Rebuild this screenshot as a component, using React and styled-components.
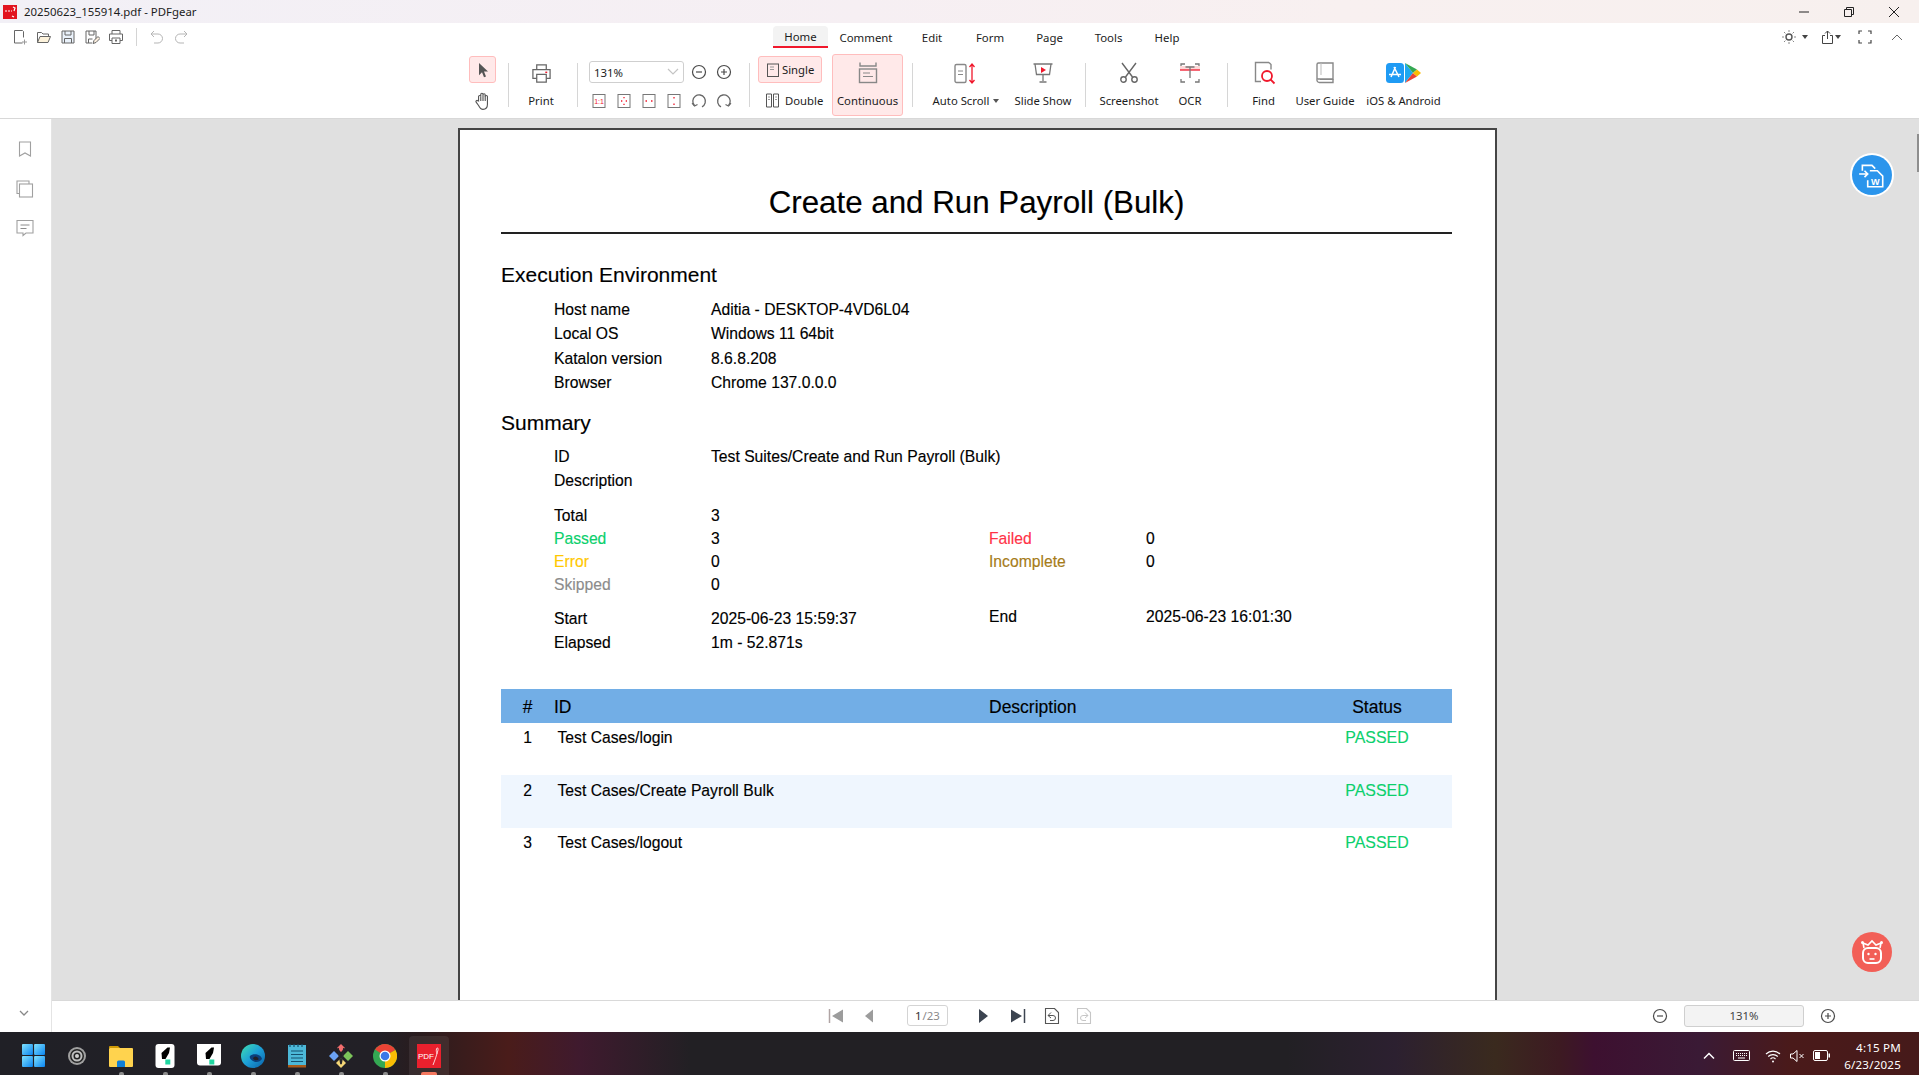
import React from 'react';
import styled, { createGlobalStyle } from 'styled-components';

const GlobalStyle = createGlobalStyle`
html, body { margin: 0; padding: 0; background: #fff; overflow: hidden; }
* { box-sizing: border-box; }
`
const uiFont = `"Noto Sans", "Open Sans", sans-serif`
const docFont = `"Liberation Sans", Arial, sans-serif`

const Screen = styled.div`
width: 1919px;
height: 1075px;
display: flex;
flex-direction: column;
overflow: hidden;
font-family: ${uiFont};
color: #1c1c1c;
`
const TitleBar = styled.div`
height: 23px;
flex: none;
display: flex;
align-items: center;
padding-left: 3px;
background: linear-gradient(90deg, #f2f0f6 0%, #f6eff3 45%, #f8f0f0 70%, #f7f0ee 100%);
font-size: 11.4px;
`
const TitleText = styled.span`
margin-left: 7px;
white-space: nowrap;
`
const WindowButtons = styled.div`
margin-left: auto;
padding-right: 3px;
display: flex;
`
const WindowButton = styled.div`
width: 45px;
height: 20px;
display: flex;
align-items: center;
justify-content: center;
`
const Ribbon = styled.div`
height: 96px;
flex: none;
border-bottom: 1px solid #d8d8d8;
background: #fff;
`
const TopRow = styled.div`
height: 25px;
display: flex;
align-items: center;
padding: 3px 0 0 8px;
`
const QuickButton = styled.div`
width: 24px;
height: 20px;
display: flex;
align-items: center;
justify-content: center;
`
const QuickSep = styled.div`
width: 1px;
height: 18px;
background: #d4d4d4;
margin: 0 8px;
`
const Tabs = styled.div`
display: flex;
align-self: flex-end;
margin-left: 580px;
`
const Tab = styled.div`
height: 22px;
width: ${p => p.$w}px;
display: flex;
align-items: center;
justify-content: center;
font-size: 11.4px;
white-space: nowrap;
${p => p.$active && `
  background: #f3f3f3;
  border-bottom: 2px solid #f0182c;
  border-radius: 4px 4px 0 0;
`}
`
const RightTools = styled.div`
margin-left: auto;
padding-right: 14px;
display: flex;
align-items: center;
`
const RightTool = styled.div`
width: ${p => p.$w}px;
margin-left: ${p => p.$ml || 0}px;
height: 20px;
display: flex;
align-items: center;
justify-content: center;
`
const ToolRow = styled.div`
height: 70px;
display: flex;
padding-left: 469px;
`
const Sep = styled.div`
width: 1px;
height: 44px;
margin: 15px 0 0 ${p => p.$ml || 0}px;
background: #d6d6d6;
flex: none;
`
const StackCol = styled.div`
width: ${p => p.$w}px;
margin-left: ${p => p.$ml || 0}px;
flex: none;
display: flex;
flex-direction: column;
padding-top: 8px;
gap: 4px;
`
const ModeButton = styled.div`
height: 27px;
display: flex;
align-items: center;
justify-content: ${p => p.$center ? 'center' : 'flex-start'};
padding-left: ${p => p.$center ? 0 : 7}px;
gap: ${p => p.$gap || 5}px;
font-size: 11.3px;
white-space: nowrap;
border-radius: 3px;
${p => p.$on && `
  background: #ffe9e9;
  border: 1px solid #ffbdbd;
`}
`
const Tool = styled.div`
width: ${p => p.$w}px;
margin-left: ${p => p.$ml || 0}px;
height: ${p => p.$box ? 62 : 70}px;
margin-top: ${p => p.$box ? 6 : 0}px;
padding-top: ${p => p.$box ? 4 : 11}px;
flex: none;
display: flex;
flex-direction: column;
align-items: center;
border-radius: 3px;
${p => p.$box && `
  background: #ffe9e9;
  border: 1px solid #ffbdbd;
`}
`
const ToolIcon = styled.div`
height: 28px;
display: flex;
align-items: center;
justify-content: center;
gap: 1px;
`
const ToolLabel = styled.div`
margin-top: 6px;
height: 16px;
line-height: 16px;
font-size: 11.3px;
white-space: nowrap;
display: flex;
align-items: center;
gap: 4px;
`
const Caret = styled.span`
width: 0;
height: 0;
border-left: 3px solid transparent;
border-right: 3px solid transparent;
border-top: 4px solid ${p => p.$c || '#555'};
`
const ZoomGroup = styled.div`
width: 171px;
flex: none;
padding: 13px 0 0 11px;
display: flex;
flex-direction: column;
gap: 10px;
`
const ZoomTop = styled.div`
display: flex;
align-items: center;
`
const ZoomSelect = styled.div`
width: 95px;
height: 22px;
border: 1px solid #cfcfcf;
border-radius: 3px;
display: flex;
align-items: center;
justify-content: space-between;
padding: 0 4px;
font-size: 11.4px;
`
const ZoomRoundBtn = styled.div`
width: 25px;
display: flex;
justify-content: center;
margin-left: ${p => p.$ml || 0}px;
`
const FitRow = styled.div`
display: flex;
align-items: center;
margin-left: -3px;
`
const FitBtn = styled.div`
width: 25.1px;
display: flex;
justify-content: center;
`
const Body = styled.div`
flex: 1;
display: flex;
min-height: 0;
`
const Sidebar = styled.div`
width: 52px;
flex: none;
border-right: 1px solid #e4e4e4;
background: #fff;
display: flex;
flex-direction: column;
align-items: center;
padding: 20px 0 9px 0;
gap: 19.5px;
`
const SideIcon = styled.div`
height: 20px;
display: flex;
align-items: center;
justify-content: center;
margin-top: ${p => p.$auto ? 'auto' : 0};
margin-left: ${p => p.$auto ? -3 : -1}px;
`
const MainCol = styled.div`
flex: 1;
min-width: 0;
display: flex;
flex-direction: column;
`
const Viewer = styled.div`
flex: 1;
min-height: 0;
background: #e0e0e0;
position: relative;
overflow: hidden;
padding: 9px 0 0 406px;
`
const Page = styled.div`
width: 1039px;
min-height: 1200px;
background: #fff;
border: 2px solid #454545;
padding: 52px 0 0 41px;
font-family: ${docFont};
font-size: 15.7px;
color: #000;
-webkit-text-stroke: .15px currentColor;
`
const DocInner = styled.div`
width: 951px;
`
const DocTitle = styled.div`
height: 50px;
line-height: 41px;
text-align: center;
font-size: 31.3px;
`
const TitleRule = styled.div`
height: 2px;
background: #222;
`
const SectionHead = styled.div`
margin-top: ${p => p.$mt}px;
height: 24px;
line-height: 24px;
font-size: 21px;
`
const Rows = styled.div`
margin-top: ${p => p.$mt}px;
`
const KvRow = styled.div`
height: ${p => p.$h || 24}px;
line-height: ${p => p.$h || 24}px;
display: grid;
grid-template-columns: 53px 157px 278px 157px 1fr;
`
const KvCell = styled.div`
grid-column: ${p => p.$col};
color: ${p => p.$c || '#000'};
white-space: nowrap;
${p => p.$up && `transform: translateY(-2px);`}
`
const Table = styled.div`
margin-top: 34px;
`
const TableHead = styled.div`
height: 34px;
padding-top: 2px;
background: #72aee6;
display: grid;
grid-template-columns: 53px 435px 313px 150px;
align-items: center;
font-size: 17.5px;
`
const TableRow = styled.div`
height: ${p => p.$h}px;
padding-top: ${p => p.$pt || 3}px;
line-height: 24px;
background: ${p => p.$alt ? '#eff6fe' : 'transparent'};
display: grid;
grid-template-columns: 53px 435px 313px 150px;
align-items: start;
`
const CenterCell = styled.div`
text-align: center;
color: ${p => p.$c || '#000'};
font-size: ${p => p.$c ? '15.9px' : 'inherit'};
`
const IdCell = styled.div`
padding-left: ${p => p.$pl || 0}px;
`
const FloatButton = styled.div`
position: absolute;
right: ${p => p.$r}px;
top: ${p => p.$t}px;
width: 40px;
height: 40px;
border-radius: 50%;
background: ${p => p.$bg};
box-shadow: ${p => p.$ring ? '0 0 0 2px #fff' : 'none'};
display: flex;
align-items: center;
justify-content: center;
`
const ScrollThumb = styled.div`
position: absolute;
right: 0;
top: 15px;
width: 2px;
height: 38px;
background: #8e8e8e;
`
const BottomBar = styled.div`
height: 32px;
flex: none;
border-top: 1px solid #d9d9d9;
background: #fff;
display: flex;
align-items: center;
padding: 0 79px 2px 770px;
`
const NavBtn = styled.div`
width: 28px;
height: 24px;
flex: none;
margin-left: ${p => p.$ml || 0}px;
display: flex;
align-items: center;
justify-content: center;
`
const PageInput = styled.div`
width: 41px;
height: 21px;
margin-left: 23px;
flex: none;
border: 1px solid #d4d4d4;
border-radius: 3px;
display: flex;
align-items: center;
justify-content: center;
font-size: 11.4px;
color: #555;
`
const PageNow = styled.span`
color: #333;
`
const Faint = styled.span`
color: #8a8a8a;
margin-left: 1px;
`
const ZoomReadout = styled.div`
width: 120px;
height: 22px;
margin-left: 12px;
flex: none;
background: #f3f3f3;
border: 1px solid #cfcfcf;
border-radius: 3px;
display: flex;
align-items: center;
justify-content: center;
font-size: 11.4px;
color: #444;
`
const ZoomEnd = styled.div`
margin-left: auto;
display: flex;
align-items: center;
`
const ZoomEndBtn = styled.div`
width: 24px;
margin-left: ${p => p.$ml || 0}px;
display: flex;
justify-content: center;
`
const Taskbar = styled.div`
height: 43px;
flex: none;
background: linear-gradient(90deg, #202026 0px, #222026 380px, #2a1c1e 420px, #4a1c1a 508px, #3f1a2e 580px, #222024 690px, #222024 1287px, #2c2030 1395px, #3a2a1e 1495px, #3d1a22 1560px, #3d1030 1594px, #3a1a35 1700px, #4a1a1a 1790px, #461a1a 1919px);
display: flex;
align-items: center;
padding-left: 11px;
`
const TaskSlot = styled.div`
width: 44px;
height: 43px;
flex: none;
padding-top: 4px;
position: relative;
display: flex;
align-items: center;
justify-content: center;
&::after {
  content: '';
  display: ${p => p.$dot ? 'block' : 'none'};
  position: absolute;
  bottom: 0;
  left: 50%;
  width: ${p => p.$active ? 16 : 5}px;
  height: 3px;
  margin-left: ${p => p.$active ? -8 : -2.5}px;
  border-radius: 2px 2px 0 0;
  background: ${p => p.$active ? '#f4785f' : '#8c8c8c'};
}
${p => p.$active && `
  &::before {
    content: '';
    position: absolute;
    left: 2px;
    right: 2px;
    top: 4px;
    bottom: 0;
    border-radius: 4px 4px 0 0;
    background: rgba(255,255,255,.07);
  }
`}
`
const Tray = styled.div`
margin-left: auto;
display: flex;
align-items: center;
padding: 4px 18px 0 0;
color: #fff;
`
const TrayIcon = styled.div`
width: ${p => p.$w}px;
display: flex;
justify-content: center;
`
const Clock = styled.div`
margin-left: 13px;
text-align: right;
font-size: 11.6px;
line-height: 17px;
letter-spacing: .2px;
`

// ---- icons ----
const Svg = ({ s = 16, w, h, children, vb }) => (
  <svg width={w || s} height={h || s} viewBox={vb || `0 0 ${w || s} ${h || s}`} fill="none" style={{ display: 'block', flex: 'none' }}>{children}</svg>
)
const G = '#666'
const R = '#f0182c'

const AppLogo = () => (
  <Svg s={14}>
    <rect width="14" height="14" fill="#e2141f" />
    <path d="M2 6h2M5 6h2M8 6h1M10 2l2 1-1 3M9 11l2 1" stroke="#fff" strokeWidth="1.2" />
  </Svg>
)
const IcNew = () => <Svg s={16}><path d="M2.5 1.5h8l1 1v6M2.5 1.5v12.5h8" stroke={G} /><path d="M12.5 10.5v5M10 13h5" stroke="#999" /></Svg>
const IcOpen = () => <Svg s={16}><path d="M1.5 13.5v-10h4l1.5 1.500h5.500v2" stroke={G} /><path d="M1.500 13.500l2.500-6h10.500l-2.500 6z" stroke={G} fill="#fdf3dc" /></Svg>
const IcSave = () => <Svg s={16}><path d="M2 2h12v12H2z" stroke={G} fill="#eaf2fb" /><path d="M5 2v4h6V2M4.500 14V9.500h7V14" stroke={G} /></Svg>
const IcSaveAs = () => <Svg s={16}><path d="M2 2h10v8M2 2v12h6" stroke={G} /><path d="M5 2v4h5V2M4.500 14v-4h4" stroke={G} /><path d="M9 14.500l1-3 4-4 2 2-4 4z" stroke={G} fill="#fbeede" /></Svg>
const IcPrint = ({ s = 16, c = G, dot = G }) => (
  <Svg s={s} vb="0 0 16 16">
    <path d="M4 5V1.500h8V5M4 11.500H1.500V5h13v6.500H12" stroke={c} />
    <path d="M4 9h8v5.500H4z" stroke={c} />
    <rect x="7" y="10.500" width="2" height="2" fill={dot} />
  </Svg>
)
const IcUndo = ({ flip }) => (
  <Svg s={16}>
    <g transform={flip ? 'translate(16 0) scale(-1 1)' : undefined}>
      <path d="M5 2L2 5l3 3" stroke="#b5b5b5" />
      <path d="M2 5h7a4.500 4.500 0 0 1 0 9H5" stroke="#b5b5b5" />
    </g>
  </Svg>
)
const IcWinMin = () => <Svg s={12}><path d="M1 6h10" stroke="#222" /></Svg>
const IcWinRestore = () => <Svg s={12}><path d="M1.500 3.500h7v7h-7zM3.500 3.500V1.500h7v7h-2" stroke="#222" /></Svg>
const IcWinClose = () => <Svg s={12}><path d="M1 1l10 10M11 1L1 11" stroke="#222" /></Svg>
const IcSun = () => (
  <Svg s={16}>
    <circle cx="8" cy="8" r="3" stroke="#555" strokeWidth="1.400" />
    <path d="M8 1v2M8 13v2M1 8h2M13 8h2M3 3l1.400 1.400M11.600 11.600L13 13M13 3l-1.400 1.400M4.400 11.600L3 13" stroke="#888" />
  </Svg>
)
const IcShare = () => <Svg s={14}><path d="M4 5.500H1.500v8h10v-8H9" stroke="#444" /><path d="M6.500 9V1M4 3.500L6.500 1 9 3.500" stroke="#444" /></Svg>
const IcFull = () => <Svg s={14}><path d="M1 4V1h3M10 1h3v3M13 10v3h-3M4 13H1v-3" stroke="#444" strokeWidth="1.200" /></Svg>
const IcChevUp = () => <Svg s={14}><path d="M2 10l5-5 5 5" stroke="#666" /></Svg>
const IcChevDown = ({ c = '#c4c4c4' }) => <Svg w={12} h={8}><path d="M1 1l5 5 5-5" stroke={c} strokeWidth="1.200" /></Svg>
const IcPointer = () => <Svg s={16}><path d="M4 1l9 8.500H9l2 5-2 .8-2-5-3 3z" fill="#555" /></Svg>
const IcHand = () => (
  <Svg s={20} vb="0 0 18 18">
    <path d="M5 9V5a1 1 0 0 1 2 0V3a1 1 0 0 1 2 0v.500a1 1 0 0 1 2 0V5a1 1 0 0 1 2 0v7c0 3-2 4.500-4 4.500S6 15 5 13L2.800 10c-.7-1 .7-2 1.500-1.200z" stroke="#555" fill="#fff" />
    <path d="M7 5v4M9 3.500V9M11 4v5" stroke="#555" />
  </Svg>
)
const IcPrintBig = () => (
  <Svg s={21} vb="0 0 22 22">
    <path d="M6 7V2h10v5M6 16H2V7h18v9h-4" stroke={G} strokeWidth="1.300" />
    <path d="M6 12h10v8H6z" stroke={G} strokeWidth="1.300" />
    <rect x="15" y="9" width="2" height="1.500" fill={R} />
  </Svg>
)
const IcCircle = ({ plus }) => (
  <Svg s={16}>
    <circle cx="8" cy="8" r="6.500" stroke="#4a4a4a" strokeWidth="1.200" />
    <path d={plus ? 'M5 8h6M8 5v6' : 'M5 8h6'} stroke="#4a4a4a" strokeWidth="1.200" />
  </Svg>
)
const Fit = ({ d, children }) => (
  <Svg s={16}>
    <rect x="2" y="1.500" width="12" height="13" stroke="#777" />
    {d && <path d={d} stroke={R} strokeWidth="1.300" />}
    {children}
  </Svg>
)
const IcRotate = ({ flip }) => (
  <Svg s={16}>
    <g transform={flip ? 'translate(16 0) scale(-1 1)' : undefined}>
      <path d="M3.500 12.500A6.300 6.300 0 1 1 11 13.800" stroke="#666" strokeWidth="1.300" />
      <path d="M1 10.200l2.500 2.800 3-1.600" stroke="#666" strokeWidth="1.100" />
    </g>
  </Svg>
)
const IcSingle = () => <Svg s={14}><rect x="1.500" y="1" width="11" height="12.500" stroke="#555" /><path d="M4 4h4M4 6.500h4" stroke="#999" /></Svg>
const IcDouble = () => <Svg s={15}><path d="M1.500 1h5v13h-5zM8.500 1h5v13h-5z" stroke="#555" /><path d="M3 4h2M3 6.500h2M10 4h2M10 6.500h2" stroke="#999" /></Svg>
const IcContinuous = () => (
  <Svg s={24}>
    <path d="M4 1.500V5h16V1.500" stroke="#888" strokeWidth="1.400" />
    <rect x="3.500" y="8" width="17" height="13.500" stroke="#888" strokeWidth="1.400" />
    <path d="M7 12h7M7 15.500h10" stroke="#888" strokeWidth="1.200" />
  </Svg>
)
const IcAutoScroll = () => (
  <Svg s={24}>
    <rect x="1" y="3.500" width="11" height="18" rx="1.500" stroke="#888" strokeWidth="1.400" />
    <path d="M4 10h5M4 13.500h5" stroke="#888" />
    <path d="M18 3v19M15.500 6L18 3l2.500 3M15.500 19l2.500 3 2.500-3" stroke={R} strokeWidth="1.300" />
  </Svg>
)
const IcSlide = () => (
  <Svg s={22}>
    <path d="M1.500 2h19M3 2l1.500 10.500h13L19 2" stroke="#777" strokeWidth="1.300" />
    <path d="M11 12.500V19M7.500 20h7" stroke="#777" strokeWidth="1.300" />
    <path d="M9 5l5 3-5 3z" fill={R} />
  </Svg>
)
const IcScissors = () => (
  <Svg s={22}>
    <path d="M4 1l10.500 14M18 1L7.500 15" stroke="#666" strokeWidth="1.400" />
    <circle cx="5.500" cy="17.500" r="2.700" stroke="#666" strokeWidth="1.400" />
    <circle cx="16.500" cy="17.500" r="2.700" stroke="#666" strokeWidth="1.400" />
  </Svg>
)
const IcOcr = () => (
  <Svg s={22}>
    <path d="M2 5V2h4M16 2h4v3M2 17v3h4M16 20h4v-3" stroke="#777" strokeWidth="1.300" />
    <rect x="1" y="4" width="20" height="4" fill="#fcd9d9" />
    <path d="M1 8h20" stroke={R} strokeWidth="1.300" />
    <path d="M6.500 5h9M11 5v11" stroke="#777" strokeWidth="1.300" />
  </Svg>
)
const IcFind = () => (
  <Svg s={24}>
    <path d="M17 1.500H3.500v19H9" stroke="#888" strokeWidth="1.400" />
    <path d="M17 1.500l2 2v5" stroke="#888" strokeWidth="1.400" />
    <circle cx="15" cy="15" r="5" stroke={R} strokeWidth="1.800" />
    <path d="M18.500 18.500l4 4" stroke={R} strokeWidth="1.800" />
  </Svg>
)
const IcGuide = () => (
  <Svg s={24}>
    <path d="M4 18V3.500A1.500 1.500 0 0 1 5.500 2H20v16z" stroke="#888" strokeWidth="1.400" />
    <path d="M8 2v12" stroke="#bbb" strokeWidth="1" />
    <path d="M4 18.500A2.500 2.500 0 0 0 6.500 21.500H20v-3.500" stroke="#888" strokeWidth="1.400" />
    <path d="M7 18.500h13" stroke="#888" />
  </Svg>
)
const IcAppStore = () => (
  <Svg s={18} h={20} vb="0 0 18 20">
    <rect width="18" height="20" rx="3.500" fill="#1f9bf4" />
    <path d="M9.500 4L5 14M8 4l5 10M3 11.500h12" stroke="#fff" strokeWidth="1.500" />
  </Svg>
)
const IcPlay = () => (
  <Svg w={16} h={20}>
    <path d="M0 0l8 10-8 10z" fill="#1fa8f0" />
    <path d="M0 0l12 6.500L8 10z" fill="#34a853" />
    <path d="M0 20l12-6.500L8 10z" fill="#ea4335" />
    <path d="M12 6.500L16 10l-4 3.500L8 10z" fill="#fbbc04" />
  </Svg>
)
const IcBookmark = () => <Svg s={16}><path d="M2.500 1h11v14L8 12l-5.500 3z" stroke="#a0a0a0" strokeWidth="1.100" /></Svg>
const IcPages = () => <Svg s={18}><path d="M3.500 13.500H1V1h12v3" stroke="#a0a0a0" strokeWidth="1.100" /><rect x="3.500" y="4" width="13" height="13" stroke="#a0a0a0" strokeWidth="1.100" /></Svg>
const IcComment = () => <Svg s={18}><path d="M1 1.500h16v12.500h-7l-3 2.500v-2.500H1z" stroke="#a0a0a0" strokeWidth="1.100" /><path d="M4.500 6h9M4.500 9.500h6" stroke="#8c8c8c" /></Svg>
const IcDown = () => <Svg s={12}><path d="M2 4l4 4 4-4" stroke="#888" strokeWidth="1.300" /></Svg>
const IcToWord = () => (
  <Svg s={30} vb="0 0 28 28">
    <path d="M5 10V5h9l3 3" stroke="#fff" strokeWidth="1.500" />
    <path d="M2 13h8M7 10l3 3-3 3" stroke="#fff" strokeWidth="1.500" />
    <path d="M12 10h7l5 5v10H10v-6" stroke="#fff" strokeWidth="1.500" />
    <text x="13" y="23" fontSize="8.500" fontWeight="bold" fontFamily={docFont} fill="#fff">W</text>
  </Svg>
)
const IcRobot = () => (
  <Svg s={28}>
    <rect x="5" y="10" width="18" height="15" rx="5" stroke="#fff" strokeWidth="2" />
    <path d="M6 10L5 5l5 2 4-4 4 4 5-2-1 5" stroke="#fff" strokeWidth="1.600" />
    <circle cx="4.500" cy="4.500" r="1.500" fill="#fff" />
    <circle cx="23.500" cy="4.500" r="1.500" fill="#fff" />
    <circle cx="10.500" cy="16" r="1.200" fill="#fff" />
    <circle cx="17.500" cy="16" r="1.200" fill="#fff" />
    <path d="M11.500 21h5" stroke="#fff" strokeWidth="1.600" />
  </Svg>
)
const navOff = '#9c9c9c'
const navOn = '#3c4450'
const IcFirst = () => <Svg s={16}><path d="M1.500 1v14" stroke="#b0a4a4" strokeWidth="1.500" /><path d="M15 1.500v13L4 8z" fill={navOff} /></Svg>
const IcPrev = () => <Svg s={16}><path d="M11 1.500v13L3 8z" fill={navOff} /></Svg>
const IcNext = () => <Svg s={16}><path d="M4 1v14l9-7z" fill={navOn} /></Svg>
const IcLast = () => <Svg s={16}><path d="M1 1.500v13L12 8z" fill={navOn} /><path d="M14.500 1v14" stroke={navOn} strokeWidth="1.500" /></Svg>
const IcHistory = ({ c, flip }) => (
  <Svg s={16}>
    <path d="M1.500 .5h9l4 4v11h-13z" stroke={c} strokeWidth="1.100" />
    <g transform={flip ? 'translate(16 0) scale(-1 1)' : undefined}>
      <path d="M7 4.500L4 7.500l3 2.500M4 7.500h5a2.500 2.500 0 0 1 0 5H6" stroke={c} />
    </g>
  </Svg>
)

const TbWin = () => (
  <Svg s={23} vb="0 0 24 24">
    <defs><linearGradient id="w" x1="0" y1="0" x2="1" y2="1"><stop offset="0" stopColor="#7fe3ff" /><stop offset="1" stopColor="#0a84f0" /></linearGradient></defs>
    <rect x="0" y="0" width="11.400" height="11.400" rx="1" fill="url(#w)" />
    <rect x="12.600" y="0" width="11.400" height="11.400" rx="1" fill="url(#w)" />
    <rect x="0" y="12.600" width="11.400" height="11.400" rx="1" fill="url(#w)" />
    <rect x="12.600" y="12.600" width="11.400" height="11.400" rx="1" fill="url(#w)" />
  </Svg>
)
const TbRing = () => (
  <Svg s={20}>
    <circle cx="10" cy="10" r="9" fill="#a0a0a0" />
    <circle cx="10" cy="10" r="7" fill="#222" />
    <circle cx="10" cy="10" r="5.500" fill="#bdbdbd" />
    <circle cx="10" cy="10" r="3.500" fill="#222" />
    <circle cx="10" cy="10" r="2" fill="#cfcfcf" />
  </Svg>
)
const TbFolder = () => (
  <Svg s={24}>
    <path d="M0 3a1 1 0 0 1 1-1h8l2 2h-11z" fill="#cf9a06" />
    <rect x="0" y="4" width="24" height="19" rx="1" fill="#ffd34e" />
    <path d="M8 23v-5a1.500 1.500 0 0 1 1.500-1.500h5A1.500 1.500 0 0 1 16 18v5z" fill="#0f7fd6" />
  </Svg>
)
const TbApp = ({ s }) => (
  <Svg s={24}>
    <rect x={12 - s / 2} y={12 - (s + 5) / 2} width={s} height={s + 5 > 24 ? 24 : s + 5} rx="3" fill="#fff" />
    <path d="M8.500 9L14.500 3.500H17L16 9l-3.500 6H9z" fill="#000" />
    <rect x="12.300" y="15.500" width="5" height="5" fill="#1fd6a0" />
  </Svg>
)
const TbEdge = () => (
  <Svg s={24}>
    <defs><linearGradient id="e" x1="0" y1="0" x2="1" y2="1"><stop offset="0" stopColor="#3fe0b0" /><stop offset=".5" stopColor="#1da0d8" /><stop offset="1" stopColor="#0a5fa8" /></linearGradient></defs>
    <circle cx="12" cy="12" r="12" fill="url(#e)" />
    <path d="M9 12c3-3 11-2 12 3-2 3-6 4-9 2-2-1-4-3-3-5z" fill="#0c3f7a" />
    <path d="M12 14a3 3 0 0 1 4-1c2 1 2 3 0 3-2 .5-4-.5-4-2z" fill="#222026" />
  </Svg>
)
const TbNotes = () => (
  <Svg s={24}>
    <rect x="3" y="1" width="18" height="22" fill="#4cb8d8" />
    <rect x="3" y="21" width="18" height="2.500" fill="#a85a1a" />
    <path d="M6 7h12M6 10.500h12M6 14h12M6 17.500h12" stroke="#15506e" strokeWidth="1.200" />
    <path d="M5 0v3M9 0v3M13 0v3M17 0v3" stroke="#15506e" strokeWidth="1.200" />
  </Svg>
)
const TbGit = () => (
  <Svg s={24}>
    <path d="M12 0l4 4-4 4-4-4z" fill="#f26d6d" />
    <path d="M5 7l5 5-5 5-5-5z" fill="#6ba3f5" />
    <path d="M19 7l5 5-5 5-5-5z" fill="#7cc45a" />
    <path d="M12 14l5 5-5 5-5-5z" fill="#f5d777" />
    <path d="M9 4l3 16M15 4l-3 16" stroke="#26262a" strokeWidth="1.600" />
  </Svg>
)
const TbChrome = () => (
  <Svg s={24}>
    <circle cx="12" cy="12" r="12" fill="#34a853" />
    <path d="M12 12L2 5.500A12 12 0 0 1 22.400 6z" fill="#ea4335" />
    <path d="M12 12l10.400-6A12 12 0 0 1 12 24z" fill="#fbbc04" />
    <circle cx="12" cy="12" r="5.500" fill="#fff" />
    <circle cx="12" cy="12" r="4.300" fill="#3b78e7" />
  </Svg>
)
const TbPdf = () => (
  <Svg s={24}>
    <rect width="24" height="24" fill="#e8101e" />
    <text x="1" y="15" fontSize="8" fontFamily={docFont} fill="#fff">PDF</text>
    <path d="M16 21c2-5 4-11 5-15 .5-2-1-3-1.500-1-.5 2 0 3 .5 5" stroke="#fff" strokeWidth=".8" />
  </Svg>
)
const IcKeyboard = () => (
  <Svg w={17} h={12}>
    <rect x=".5" y=".5" width="16" height="10" rx="1" stroke="#fff" />
    <path d="M3 3.500h11M3 5.500h11" stroke="#fff" strokeDasharray="1 1" />
    <path d="M5 8h7" stroke="#fff" />
  </Svg>
)
const IcWifi = () => (
  <Svg s={16}>
    <path d="M1 6a10 10 0 0 1 14 0M3.200 8.500a7 7 0 0 1 9.600 0M5.500 11a3.600 3.600 0 0 1 5 0" stroke="#fff" strokeWidth="1.100" />
    <circle cx="8" cy="13.500" r="1" fill="#fff" />
  </Svg>
)
const IcMute = () => (
  <Svg s={16}>
    <path d="M1.500 6v4h2.500l4 3.500v-11L4 6z" stroke="#fff" />
    <path d="M10.500 6l4 4M14.500 6l-4 4" stroke="#fff" />
  </Svg>
)
const IcBattery = () => (
  <Svg w={17} h={11}>
    <rect x=".5" y=".5" width="14" height="10" rx="1.500" stroke="#fff" />
    <rect x="2" y="2" width="5" height="7" fill="#fff" />
    <rect x="15.500" y="3.500" width="1.500" height="4" fill="#fff" />
  </Svg>
)

export default function App() {
  return (
    <Screen>
      <GlobalStyle />
      <TitleBar>
        <AppLogo />
        <TitleText>20250623_155914.pdf - PDFgear</TitleText>
        <WindowButtons>
          <WindowButton><IcWinMin /></WindowButton>
          <WindowButton><IcWinRestore /></WindowButton>
          <WindowButton><IcWinClose /></WindowButton>
        </WindowButtons>
      </TitleBar>

      <Ribbon>
        <TopRow>
          <QuickButton><IcNew /></QuickButton>
          <QuickButton><IcOpen /></QuickButton>
          <QuickButton><IcSave /></QuickButton>
          <QuickButton><IcSaveAs /></QuickButton>
          <QuickButton><IcPrint /></QuickButton>
          <QuickSep />
          <QuickButton><IcUndo /></QuickButton>
          <QuickButton><IcUndo flip /></QuickButton>
          <Tabs>
            <Tab $w={55} $active>Home</Tab>
            <Tab $w={76}>Comment</Tab>
            <Tab $w={56}>Edit</Tab>
            <Tab $w={60}>Form</Tab>
            <Tab $w={59}>Page</Tab>
            <Tab $w={59}>Tools</Tab>
            <Tab $w={58}>Help</Tab>
          </Tabs>
          <RightTools>
            <RightTool $w={18}><IcSun /></RightTool>
            <RightTool $w={14}><Caret $c="#444" /></RightTool>
            <RightTool $w={14} $ml={9}><IcShare /></RightTool>
            <RightTool $w={6}><Caret $c="#444" /></RightTool>
            <RightTool $w={48}><IcFull /></RightTool>
            <RightTool $w={16}><IcChevUp /></RightTool>
          </RightTools>
        </TopRow>
        <ToolRow>
          <StackCol $w={27}>
            <ModeButton $on $center><IcPointer /></ModeButton>
            <ModeButton $center><IcHand /></ModeButton>
          </StackCol>
          <Sep $ml={12} />
          <Tool $w={64}>
            <ToolIcon><IcPrintBig /></ToolIcon>
            <ToolLabel>Print</ToolLabel>
          </Tool>
          <Sep $ml={4} />
          <ZoomGroup>
            <ZoomTop>
              <ZoomSelect>131%<IcChevDown /></ZoomSelect>
              <ZoomRoundBtn $ml={2}><IcCircle /></ZoomRoundBtn>
              <ZoomRoundBtn><IcCircle plus /></ZoomRoundBtn>
            </ZoomTop>
            <FitRow>
              <FitBtn><Fit><text x="8" y="10.500" fontSize="7" textAnchor="middle" fontFamily={docFont} fill={R}>1:1</text></Fit></FitBtn>
              <FitBtn><Fit d="M8 4v1.300M8 10.700V12M5 8h1.300M9.700 8H11" /></FitBtn>
              <FitBtn><Fit d="M4.500 8h1.500M10 8h1.500" /></FitBtn>
              <FitBtn><Fit d="M8 4v1.500M8 10.500V12" /></FitBtn>
              <FitBtn><IcRotate /></FitBtn>
              <FitBtn><IcRotate flip /></FitBtn>
            </FitRow>
          </ZoomGroup>
          <Sep />
          <StackCol $w={64} $ml={8}>
            <ModeButton $on $gap={2}><IcSingle />Single</ModeButton>
            <ModeButton><IcDouble />Double</ModeButton>
          </StackCol>
          <Tool $w={71} $ml={10} $box>
            <ToolIcon><IcContinuous /></ToolIcon>
            <ToolLabel>Continuous</ToolLabel>
          </Tool>
          <Sep $ml={9} />
          <Tool $w={84} $ml={11}>
            <ToolIcon><IcAutoScroll /></ToolIcon>
            <ToolLabel>Auto Scroll<Caret /></ToolLabel>
          </Tool>
          <Tool $w={70}>
            <ToolIcon><IcSlide /></ToolIcon>
            <ToolLabel>Slide Show</ToolLabel>
          </Tool>
          <Sep $ml={7} />
          <Tool $w={86}>
            <ToolIcon><IcScissors /></ToolIcon>
            <ToolLabel>Screenshot</ToolLabel>
          </Tool>
          <Tool $w={36}>
            <ToolIcon><IcOcr /></ToolIcon>
            <ToolLabel>OCR</ToolLabel>
          </Tool>
          <Sep $ml={19} />
          <Tool $w={71}>
            <ToolIcon><IcFind /></ToolIcon>
            <ToolLabel>Find</ToolLabel>
          </Tool>
          <Tool $w={52}>
            <ToolIcon><IcGuide /></ToolIcon>
            <ToolLabel>User Guide</ToolLabel>
          </Tool>
          <Tool $w={105}>
            <ToolIcon><IcAppStore /><IcPlay /></ToolIcon>
            <ToolLabel>iOS &amp; Android</ToolLabel>
          </Tool>
        </ToolRow>
      </Ribbon>

      <Body>
        <Sidebar>
          <SideIcon><IcBookmark /></SideIcon>
          <SideIcon><IcPages /></SideIcon>
          <SideIcon><IcComment /></SideIcon>
          <SideIcon $auto><IcDown /></SideIcon>
        </Sidebar>
        <MainCol>
          <Viewer>
            <Page>
              <DocInner>
                <DocTitle>Create and Run Payroll (Bulk)</DocTitle>
                <TitleRule />
                <SectionHead $mt={29}>Execution Environment</SectionHead>
                <Rows $mt={11}>
                  <KvRow><KvCell $col={2}>Host name</KvCell><KvCell $col={3}>Aditia - DESKTOP-4VD6L04</KvCell></KvRow>
                  <KvRow><KvCell $col={2}>Local OS</KvCell><KvCell $col={3}>Windows 11 64bit</KvCell></KvRow>
                  <KvRow $h={25}><KvCell $col={2}>Katalon version</KvCell><KvCell $col={3}>8.6.8.208</KvCell></KvRow>
                  <KvRow><KvCell $col={2}>Browser</KvCell><KvCell $col={3}>Chrome 137.0.0.0</KvCell></KvRow>
                </Rows>
                <SectionHead $mt={16}>Summary</SectionHead>
                <Rows $mt={9}>
                  <KvRow $h={25}><KvCell $col={2}>ID</KvCell><KvCell $col={3}>Test Suites/Create and Run Payroll (Bulk)</KvCell></KvRow>
                  <KvRow><KvCell $col={2}>Description</KvCell></KvRow>
                </Rows>
                <Rows $mt={11}>
                  <KvRow $h={23}><KvCell $col={2}>Total</KvCell><KvCell $col={3}>3</KvCell></KvRow>
                  <KvRow $h={23}>
                    <KvCell $col={2} $c="#0bd06c">Passed</KvCell><KvCell $col={3}>3</KvCell>
                    <KvCell $col={4} $c="#ff3347">Failed</KvCell><KvCell $col={5}>0</KvCell>
                  </KvRow>
                  <KvRow $h={23}>
                    <KvCell $col={2} $c="#ffc800">Error</KvCell><KvCell $col={3}>0</KvCell>
                    <KvCell $col={4} $c="#a67c1a">Incomplete</KvCell><KvCell $col={5}>0</KvCell>
                  </KvRow>
                  <KvRow $h={23}><KvCell $col={2} $c="#8c8c8c">Skipped</KvCell><KvCell $col={3}>0</KvCell></KvRow>
                </Rows>
                <Rows $mt={11}>
                  <KvRow>
                    <KvCell $col={2}>Start</KvCell><KvCell $col={3}>2025-06-23 15:59:37</KvCell>
                    <KvCell $col={4} $up>End</KvCell><KvCell $col={5} $up>2025-06-23 16:01:30</KvCell>
                  </KvRow>
                  <KvRow><KvCell $col={2}>Elapsed</KvCell><KvCell $col={3}>1m - 52.871s</KvCell></KvRow>
                </Rows>
                <Table>
                  <TableHead>
                    <CenterCell>#</CenterCell>
                    <IdCell>ID</IdCell>
                    <IdCell>Description</IdCell>
                    <CenterCell>Status</CenterCell>
                  </TableHead>
                  <TableRow $h={52}>
                    <CenterCell>1</CenterCell>
                    <IdCell $pl={3.5}>Test Cases/login</IdCell>
                    <IdCell />
                    <CenterCell $c="#0bd06c">PASSED</CenterCell>
                  </TableRow>
                  <TableRow $h={53} $alt $pt={4}>
                    <CenterCell>2</CenterCell>
                    <IdCell $pl={3.5}>Test Cases/Create Payroll Bulk</IdCell>
                    <IdCell />
                    <CenterCell $c="#0bd06c">PASSED</CenterCell>
                  </TableRow>
                  <TableRow $h={52}>
                    <CenterCell>3</CenterCell>
                    <IdCell $pl={3.5}>Test Cases/logout</IdCell>
                    <IdCell />
                    <CenterCell $c="#0bd06c">PASSED</CenterCell>
                  </TableRow>
                </Table>
              </DocInner>
            </Page>
            <FloatButton $r={27} $t={36} $bg="#2b95ec" $ring><IcToWord /></FloatButton>
            <FloatButton $r={27} $t={813} $bg="#f25f57"><IcRobot /></FloatButton>
            <ScrollThumb />
          </Viewer>
          <BottomBar>
            <NavBtn><IcFirst /></NavBtn>
            <NavBtn $ml={6}><IcPrev /></NavBtn>
            <PageInput><PageNow>1</PageNow><Faint>/23</Faint></PageInput>
            <NavBtn $ml={21}><IcNext /></NavBtn>
            <NavBtn $ml={7}><IcLast /></NavBtn>
            <NavBtn $ml={6}><IcHistory c="#555" /></NavBtn>
            <NavBtn $ml={4}><IcHistory c="#c6c6c6" flip /></NavBtn>
            <ZoomEnd>
              <ZoomEndBtn><IcCircle /></ZoomEndBtn>
              <ZoomReadout>131%</ZoomReadout>
              <ZoomEndBtn $ml={12}><IcCircle plus /></ZoomEndBtn>
            </ZoomEnd>
          </BottomBar>
        </MainCol>
      </Body>

      <Taskbar>
        <TaskSlot><TbWin /></TaskSlot>
        <TaskSlot><TbRing /></TaskSlot>
        <TaskSlot $dot><TbFolder /></TaskSlot>
        <TaskSlot $dot><TbApp s={19} /></TaskSlot>
        <TaskSlot $dot><TbApp s={24} /></TaskSlot>
        <TaskSlot $dot><TbEdge /></TaskSlot>
        <TaskSlot $dot><TbNotes /></TaskSlot>
        <TaskSlot $dot><TbGit /></TaskSlot>
        <TaskSlot $dot><TbChrome /></TaskSlot>
        <TaskSlot $dot $active><TbPdf /></TaskSlot>
        <Tray>
          <TrayIcon $w={20}><Svg s={12}><path d="M1 8.500l5-5 5 5" stroke="#fff" strokeWidth="1.500" /></Svg></TrayIcon>
          <TrayIcon $w={44}><IcKeyboard /></TrayIcon>
          <TrayIcon $w={20}><IcWifi /></TrayIcon>
          <TrayIcon $w={28}><IcMute /></TrayIcon>
          <TrayIcon $w={20}><IcBattery /></TrayIcon>
          <Clock>4:15 PM<br />6/23/2025</Clock>
        </Tray>
      </Taskbar>
    </Screen>
  )
}
